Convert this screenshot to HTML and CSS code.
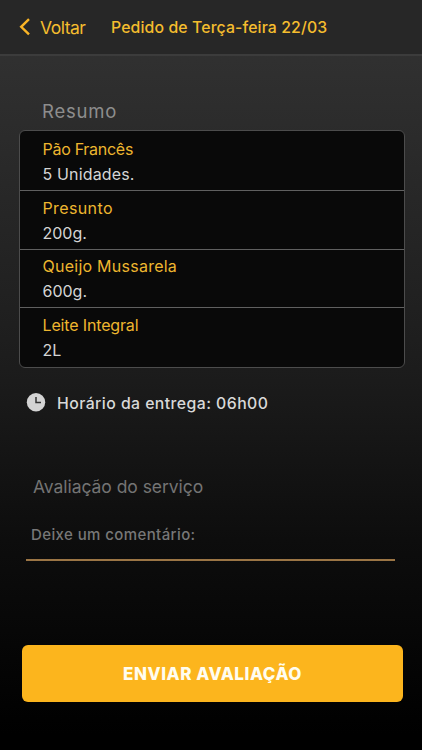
FILE: index.html
```html
<!DOCTYPE html>
<html lang="pt-BR">
<head>
<meta charset="utf-8">
<title>Pedido</title>
<link rel="stylesheet" href="styles.css">
</head>
<body>
<header class="bar">
  <a class="back"><svg width="12" height="18" viewBox="0 0 12 18"><path d="M10 1.200 2.200 8.800l7.800 7.600"/></svg><span class="back-label">Voltar</span></a>
  <h1 class="title">Pedido de Terça-feira 22/03</h1>
</header>
<main>
  <h2 class="summary-title">Resumo</h2>
  <ul class="card">
    <li class="item"><span class="name bread">Pão Francês</span><span class="qty units">5 Unidades.</span></li>
    <li class="item"><span class="name ham">Presunto</span><span class="qty">200g.</span></li>
    <li class="item tight"><span class="name cheese">Queijo Mussarela</span><span class="qty">600g.</span></li>
    <li class="item last"><span class="name milk">Leite Integral</span><span class="qty liters">2L</span></li>
  </ul>
  <div class="delivery">
    <svg width="20" height="20" viewBox="0 0 20 20"><circle cx="10" cy="9.300" r="9.200"/><path d="M10 4v5.500h5"/></svg>
    <span>Horário da entrega: 06h00</span>
  </div>
  <h2 class="rating-title">Avaliação do serviço</h2>
  <div class="comment"><span>Deixe um comentário:</span></div>
  <button class="send">ENVIAR AVALIAÇÃO</button>
</main>
</body>
</html>
```
FILE: styles.css
```css
* { box-sizing: border-box; }
body {
  margin: 0;
  height: 750px;
  overflow: hidden;
  background: linear-gradient(#343434 0, #303030 60px, #1c1c1c 370px, #0d0d0d 540px, #000 735px);
  font-family: Inter, "Liberation Sans", sans-serif;
  font-size: 16px;
}
h1, h2, ul { margin: 0; padding: 0; font-weight: 400; }
.bar {
  display: flex;
  height: 56px;
  padding-left: 19px;
  background: #272727;
  border-bottom: 2px solid #3c3c3c;
  color: #f5bd2e;
}
.back { display: flex; width: 92px; padding-top: 18px; }
.back svg { fill: none; stroke: #f9b426; stroke-width: 2.4; }
.back-label { margin-left: 9px; font-size: 17.5px; line-height: 20px; letter-spacing: -0.5px; }
.title { padding-top: 17px; font-size: 15.8px; line-height: 21px; font-weight: 500; letter-spacing: .12px; white-space: nowrap; }
.summary-title { margin: 45px 0 0 42px; font-size: 18.5px; line-height: 20px; color: #8d8d8d; letter-spacing: .8px; }
.card {
  width: 386px;
  height: 238px;
  margin: 9px 0 0 19px;
  background: #090909;
  border: 1px solid #4c4c4c;
  border-radius: 6px;
  list-style: none;
}
.item { display: flex; flex-direction: column; height: 60px; padding: 6px 0 0 22.5px; border-bottom: 1px solid #606060; line-height: 25px; }
.item + .item { height: 59px; }
.item + .item:not(.tight):not(.last) { padding-top: 5px; }
.item.tight { height: 58px; padding-top: 4px; }
.item.last { height: 59px; padding-top: 5px; border: 0; }
.name { color: #eeb62f; }
.bread { letter-spacing: -.28px; }
.ham { letter-spacing: .38px; }
.cheese { letter-spacing: .25px; }
.milk { letter-spacing: -.15px; }
.qty { color: #d5d5d5; }
.units { letter-spacing: .15px; }
.delivery { display: flex; align-items: center; height: 24px; margin: 23px 0 0 26px; color: #d8d8d8; font-size: 15.8px; font-weight: 500; }
.delivery span { margin-left: 11px; padding-top: 1px; letter-spacing: .44px; white-space: nowrap; }
.delivery circle { fill: #d4d4d4; }
.delivery path { fill: none; stroke: #333; stroke-width: 1.5; }
.rating-title { margin: 60px 0 0 33px; font-size: 17.5px; line-height: 24px; letter-spacing: -.05px; font-weight: 400; color: #747474; }
.comment { width: 369px; height: 39px; margin: 23px 0 0 26px; padding: 0 0 0 5px; border-bottom: 2px solid #9b7545; color: #777; font-size: 15px; line-height: 26px; font-weight: 500; letter-spacing: .4px; }
.send { display: block; width: 381px; height: 57px; margin: 84px 0 0 22px; padding: 1px 0 0; border: 0; border-radius: 6px; background: #fcb51d; color: #fffdf0; font: 800 17px/56px Inter, sans-serif; letter-spacing: .55px; }
```
